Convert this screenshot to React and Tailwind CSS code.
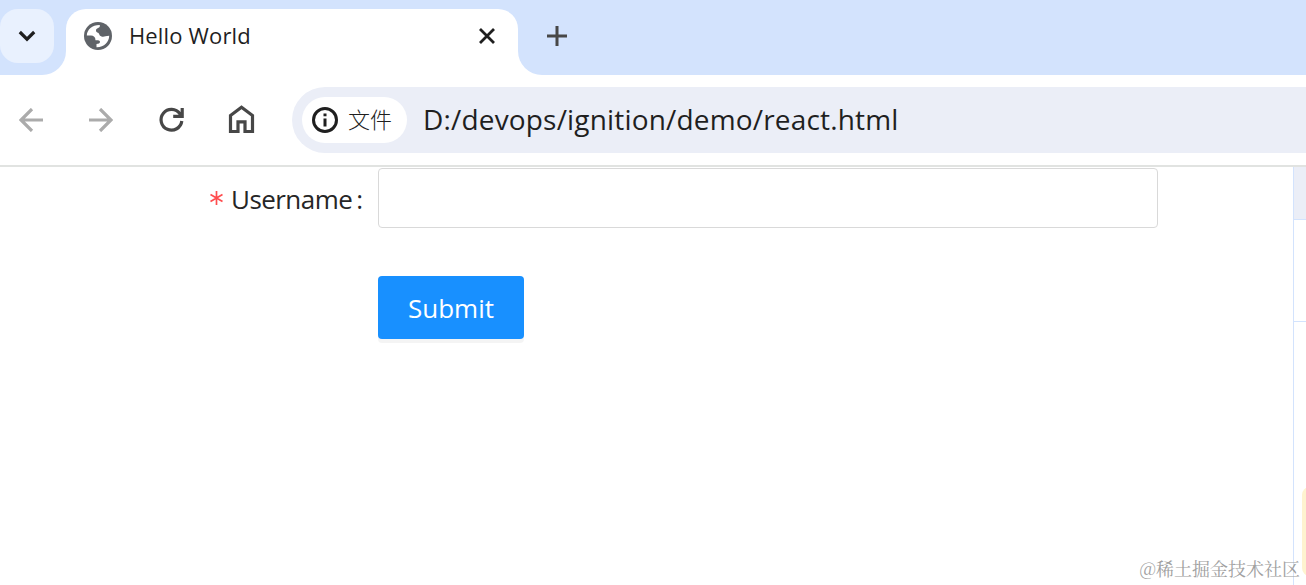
import React from "react";

function TabStrip() {
  return (
    <header className="flex h-[75px] w-full bg-white">
      <div className="h-[75px] w-[66px] shrink-0 rounded-br-[24px] bg-[#d3e3fd] pt-[9px]">
        <button aria-label="Search tabs" className="flex h-[54px] w-[54px] items-center justify-center rounded-[18px] bg-[#e9f1fe]">
          <svg width="20" height="14" viewBox="0 0 20 14" fill="none" stroke="#1f1f1f" strokeWidth="3.2">
            <path d="M2.8 3 L10 10.2 L17.2 3" />
          </svg>
        </button>
      </div>
      <div className="h-[60px] w-[452px] shrink-0 bg-[#d3e3fd] pt-[9px]">
        <div className="flex h-[54px] items-center rounded-t-[20px] bg-white pl-[18px] pr-[22px]">
          <svg className="shrink-0" width="28" height="28" viewBox="0 0 28 28">
            <circle cx="14" cy="14" r="14" fill="#5f6368" />
            <path fill="#fff" d="M2.8 13.5 C3 7.5 8.5 2.8 15.8 3 L15.8 4.5 C15 6.5 12 6 12 8.5 C12 10 13 10.5 14 10.8 C15.5 11.5 15 13.8 17.5 14.5 C20.5 15.2 21 13.8 25.2 13.8 C25.2 20 20 25.4 12.5 25.2 L12.5 22 C14.5 22 16 21.3 16 19.8 C16 18 13.5 18.2 11.5 18.2 C11.5 15 9.5 13.5 7 13.5 Z" />
          </svg>
          <span className="ml-[17px] grow whitespace-pre pb-[2px] font-['Open_Sans'] text-[22px] leading-[30px] tracking-[0.15px] text-[#1f1f1f]">Hello World</span>
          <svg width="18" height="18" viewBox="0 0 18 18" stroke="#1f1f1f" strokeWidth="2.8">
            <path d="M2 2 L16 16 M16 2 L2 16" />
          </svg>
        </div>
      </div>
      <div className="flex h-[75px] grow rounded-bl-[24px] bg-[#d3e3fd] pl-[29px] pt-[26px]">
        <svg width="20" height="20" viewBox="0 0 20 20" stroke="#474747" strokeWidth="3">
          <path d="M10 0 V20 M0 10 H20" />
        </svg>
      </div>
    </header>
  );
}

function Toolbar() {
  return (
    <div className="flex h-[92px] w-full items-center border-b-2 border-[#e1e3e1] bg-white">
      <svg className="ml-[19px]" width="24" height="24" viewBox="0 0 24 24" fill="none" stroke="#ababab" strokeWidth="3.2">
        <path d="M24 12 H2.5 M13 1 L2 12 L13 23" />
      </svg>
      <svg className="ml-[46px]" width="24" height="24" viewBox="0 0 24 24" fill="none" stroke="#ababab" strokeWidth="3.2">
        <path d="M0 12 H21.5 M11 1 L22 12 L11 23" />
      </svg>
      <svg className="ml-[45px]" width="28" height="28" viewBox="0 0 28 28" fill="none" stroke="#474747" strokeWidth="3.2">
        <path d="M23.8 15 A10.4 10.4 0 1 1 22 7.8 L23.5 10.5 M24.2 2 V11.5 M25.8 10.4 H15.2" />
      </svg>
      <svg className="ml-[41px]" width="28" height="30" viewBox="0 0 28 30" fill="none" stroke="#474747" strokeWidth="3.2">
        <path d="M3.5 26.5 V10.5 L14.5 2.3 L25.5 10.5 V26.5 H18 V16.8 H11 V26.5 Z" />
      </svg>
      <div className="ml-[37px] flex h-[66px] grow items-center rounded-l-full bg-[#ebeef7] pl-[10px]">
        <div className="flex h-[46px] w-[105px] items-center rounded-full bg-white pl-[10px]">
          <svg width="26" height="26" viewBox="0 0 26 26">
            <circle cx="13" cy="13" r="11.5" fill="none" stroke="#1f1f1f" strokeWidth="3" />
            <path d="M13 11.5 V19.5 M13 6.5 V9.3" stroke="#1f1f1f" strokeWidth="3" />
          </svg>
          <span className="ml-[10px] whitespace-nowrap pb-[4px] font-['Noto_Sans_CJK_SC',sans-serif] text-[22px] font-light leading-[30px] text-[#1f1f1f]">文件</span>
        </div>
        <span className="ml-[16px] whitespace-nowrap pb-[2px] font-['Open_Sans'] text-[28px] leading-[38px] tracking-[0.17px] text-[#1f1f1f]">D:/devops/ignition/demo/react.html</span>
      </div>
    </div>
  );
}

function LoginForm() {
  return (
    <form className="grow pt-px">
      <div className="flex h-[60px]">
        <label htmlFor="username" className="flex w-[378px] shrink-0 items-center pl-[210px] pt-px font-['Open_Sans'] text-[26px] leading-[36px] text-[#262626]">
          <svg className="mb-[2px] mr-[8px] shrink-0" width="13" height="16" viewBox="0 0 13 16" stroke="#ff4d4f" strokeWidth="1.7">
            <path d="M6.5 1 V15 M0.5 4.5 L12.5 11.5 M12.5 4.5 L0.5 11.5" />
          </svg>
          <span className="tracking-[-0.55px]">Username</span>
          <span className="ml-[4px]">:</span>
        </label>
        <input id="username" className="h-[60px] w-[780px] rounded-[4px] border border-[#d9d9d9] bg-white outline-none" />
      </div>
      <button type="button" className="ml-[378px] mt-[48px] flex h-[63px] w-[146px] items-center justify-center rounded-[4px] bg-[#1890ff] font-['Open_Sans'] text-[26px] leading-[36px] text-white shadow-[0_4px_0_rgba(0,0,0,0.045)]">
        Submit
      </button>
    </form>
  );
}

function SidePanel() {
  return (
    <aside className="flex w-[13px] shrink-0 flex-col overflow-hidden border-l border-[#d3e3fd]">
      <div className="h-[53px] border-b border-[#d3e3fd] bg-[#ebeef7]" />
      <div className="h-[102px] border-b border-[#d3e3fd]" />
      <div className="ml-[8px] mt-[165px] h-[89px] w-[30px] rounded-[8px] bg-[#fef3cf]" />
    </aside>
  );
}

export default function App() {
  return (
    <div className="relative flex h-[585px] w-[1306px] flex-col overflow-hidden bg-white">
      <TabStrip />
      <Toolbar />
      <main className="flex h-[418px]">
        <LoginForm />
        <SidePanel />
      </main>
      <span className="absolute bottom-[4px] right-[6px] whitespace-nowrap font-['Noto_Serif_CJK_SC','Noto_Sans_CJK_SC',serif] text-[18px] font-normal leading-[26px] text-[#a0a0a0]">@稀土掘金技术社区</span>
    </div>
  );
}
